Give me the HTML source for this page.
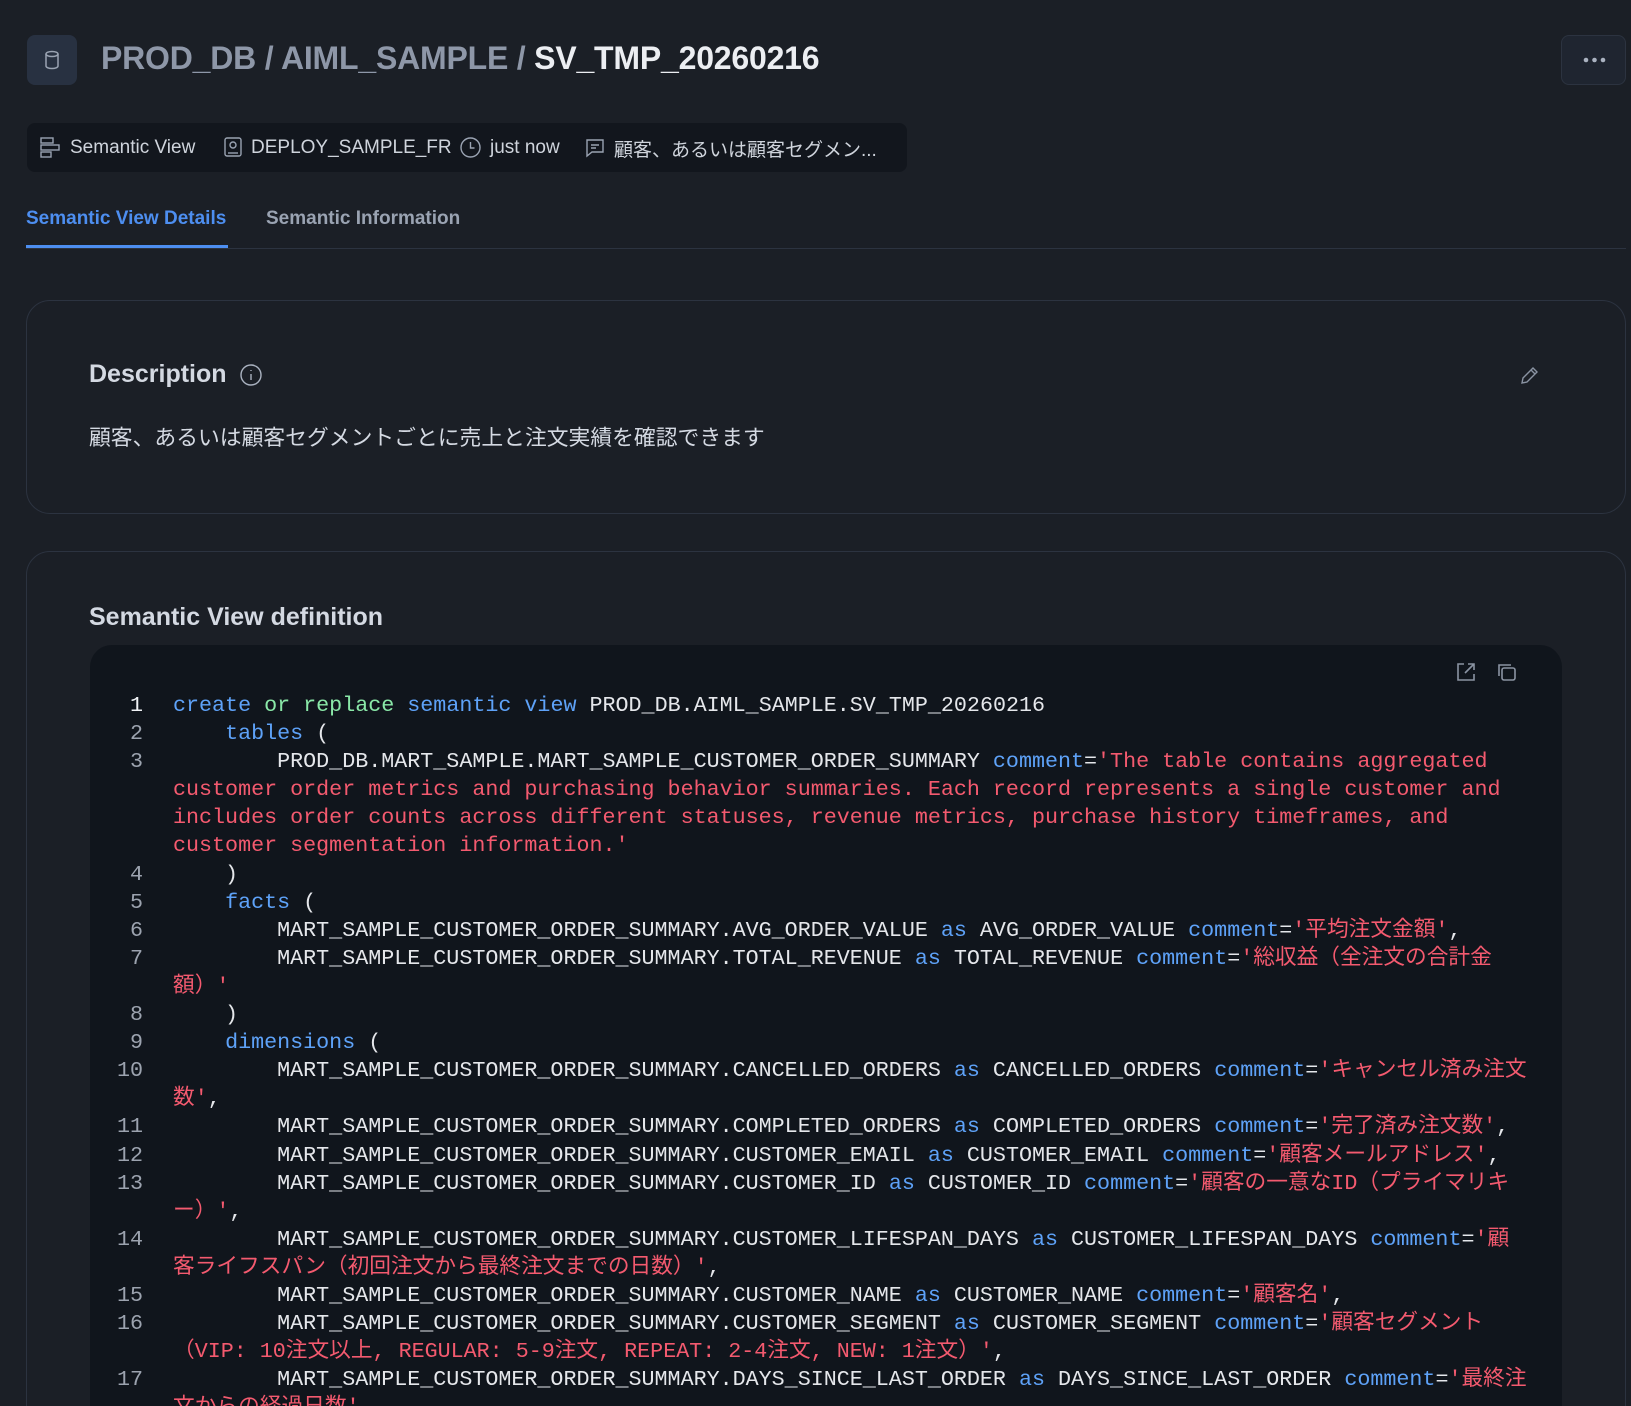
<!DOCTYPE html>
<html><head><meta charset="utf-8">
<style>
*{margin:0;padding:0;box-sizing:border-box}
html,body{width:1631px;height:1406px;overflow:hidden}
body{background:#1b1f26;font-family:"Liberation Sans","Noto Sans CJK JP",sans-serif;position:relative;color:#e5e7eb}
.abs{position:absolute}
.iconbox{left:27px;top:35px;width:50px;height:50px;background:#283141;border-radius:8px}
.title{left:101px;top:40px;font-size:32px;font-weight:bold;letter-spacing:-0.2px;color:#8e97a8;white-space:nowrap}
.title b{color:#eceef2}
.more{left:1561px;top:35px;width:65px;height:50px;border:1px solid #2c3340;background:#1f2530;border-radius:8px}
.meta{left:27px;top:123px;width:880px;height:49px;background:#12161d;border-radius:8px}
.mt{position:absolute;top:137px;font-size:19px;color:#cfd4dc;white-space:nowrap}
.tab{position:absolute;top:208px;font-size:19px;font-weight:bold;white-space:nowrap}
.card{position:absolute;left:26px;width:1600px;border:1px solid #2c3340;border-radius:24px}
.code{position:absolute;left:90px;top:645px;width:1472px;height:800px;background:#10151c;border-radius:22px}
.lines{position:absolute;left:90px;top:692px;width:1460px;font-family:"Liberation Mono","Noto Sans CJK JP",monospace;font-size:21.7px;line-height:28.1px}
.r{position:relative;height:28.1px}
.n{position:absolute;left:0;width:53px;text-align:right;color:#9ca3af}
.c{position:absolute;left:83px;color:#e5e7eb;white-space:pre}
.k{color:#5ea2f8}.g{color:#8ae8a8}.s{color:#f45a6f}
</style></head><body>
<div class="abs iconbox"><svg width="50" height="50" viewBox="0 0 50 50"><ellipse cx="25" cy="19" rx="6" ry="2.5" fill="none" stroke="#9aa3b2" stroke-width="1.5"/><path d="M19 19v12c0 1.4 2.7 2.5 6 2.5s6-1.1 6-2.5V19" fill="none" stroke="#9aa3b2" stroke-width="1.5"/></svg></div>
<div class="abs title">PROD_DB / AIML_SAMPLE / <b>SV_TMP_20260216</b></div>
<div class="abs more"><svg width="65" height="50"><circle cx="24" cy="24" r="2.3" fill="#aab2c0"/><circle cx="32.5" cy="24" r="2.3" fill="#aab2c0"/><circle cx="41" cy="24" r="2.3" fill="#aab2c0"/></svg></div>

<div class="abs meta"></div>
<svg class="abs" style="left:39px;top:135px" width="24" height="24" viewBox="0 0 24 24" fill="none" stroke="#9aa3b2" stroke-width="1.4"><rect x="2" y="3" width="12" height="5"/><rect x="2" y="10" width="18" height="5"/><rect x="2" y="17" width="10" height="5"/></svg>
<div class="mt" style="left:70px">Semantic View</div>
<svg class="abs" style="left:222px;top:136px" width="22" height="22" viewBox="0 0 22 22" fill="none" stroke="#9aa3b2" stroke-width="1.4"><rect x="3" y="2" width="16" height="18" rx="2"/><circle cx="11" cy="9" r="3"/><path d="M6 17h10"/></svg>
<div class="mt" style="left:251px">DEPLOY_SAMPLE_FR</div>
<svg class="abs" style="left:459px;top:136px" width="23" height="23" viewBox="0 0 23 23" fill="none" stroke="#9aa3b2" stroke-width="1.4"><circle cx="11.5" cy="11.5" r="9.5"/><path d="M11.5 6v6h4"/></svg>
<div class="mt" style="left:490px">just now</div>
<svg class="abs" style="left:584px;top:137px" width="22" height="22" viewBox="0 0 22 22" fill="none" stroke="#9aa3b2" stroke-width="1.4"><path d="M3 3h16v12H8l-5 4z"/><path d="M7 8h8M7 11h5"/></svg>
<div class="mt" style="left:614px;top:135px">顧客、あるいは顧客セグメン...</div>

<div class="tab" style="left:26px;color:#4d8ef0">Semantic View Details</div>
<div class="tab" style="left:266px;color:#9aa3b2">Semantic Information</div>
<div class="abs" style="left:26px;top:248px;width:1600px;height:1px;background:#2c3340"></div>
<div class="abs" style="left:26px;top:245px;width:202px;height:3px;background:#4d8ef0"></div>

<div class="card" style="top:300px;height:214px"></div>
<div class="abs" style="left:89px;top:360px;font-size:25px;font-weight:bold;color:#d4d9e2">Description</div>
<svg class="abs" style="left:239px;top:363px" width="24" height="24" viewBox="0 0 24 24" fill="none" stroke="#aab2c0" stroke-width="1.4"><circle cx="12" cy="12" r="10"/><path d="M12 11v6M12 7v1"/></svg>
<svg class="abs" style="left:1518px;top:363px" width="24" height="24" viewBox="0 0 24 24" fill="none" stroke="#8a93a2" stroke-width="1.4"><path d="M4 20l1-5L15 5l4 4L9 19z M13 7l4 4"/></svg>
<div class="abs" style="left:89px;top:421px;font-size:21.8px;color:#d4d9e2">顧客、あるいは顧客セグメントごとに売上と注文実績を確認できます</div>

<div class="card" style="top:551px;height:900px"></div>
<div class="abs" style="left:89px;top:603px;font-size:25px;font-weight:bold;color:#d4d9e2">Semantic View definition</div>
<div class="code"></div>
<svg class="abs" style="left:1454px;top:660px" width="24" height="24" viewBox="0 0 24 24" fill="none" stroke="#8a93a2" stroke-width="1.6"><path d="M10 4H4v16h16v-6M14 4h6v6M20 4L11 13"/></svg>
<svg class="abs" style="left:1494px;top:660px" width="24" height="24" viewBox="0 0 24 24" fill="none" stroke="#8a93a2" stroke-width="1.6"><rect x="8" y="8" width="13" height="12" rx="2"/><path d="M5 16V5h12"/></svg>

<div class="lines">
<div class="r"><span class="n" style="color:#f1f3f6">1</span><span class="c"><span class="k">create</span> <span class="g">or replace</span> <span class="k">semantic view</span> PROD_DB.AIML_SAMPLE.SV_TMP_20260216</span></div>
<div class="r"><span class="n">2</span><span class="c">    <span class="k">tables</span> (</span></div>
<div class="r"><span class="n">3</span><span class="c">        PROD_DB.MART_SAMPLE.MART_SAMPLE_CUSTOMER_ORDER_SUMMARY <span class="k">comment</span>=<span class="s">'The table contains aggregated</span></span></div>
<div class="r"><span class="c s">customer order metrics and purchasing behavior summaries. Each record represents a single customer and</span></div>
<div class="r"><span class="c s">includes order counts across different statuses, revenue metrics, purchase history timeframes, and</span></div>
<div class="r"><span class="c s">customer segmentation information.'</span></div>
<div class="r"><span class="n">4</span><span class="c">    )</span></div>
<div class="r"><span class="n">5</span><span class="c">    <span class="k">facts</span> (</span></div>
<div class="r"><span class="n">6</span><span class="c">        MART_SAMPLE_CUSTOMER_ORDER_SUMMARY.AVG_ORDER_VALUE <span class="k">as</span> AVG_ORDER_VALUE <span class="k">comment</span>=<span class="s">'平均注文金額'</span>,</span></div>
<div class="r"><span class="n">7</span><span class="c">        MART_SAMPLE_CUSTOMER_ORDER_SUMMARY.TOTAL_REVENUE <span class="k">as</span> TOTAL_REVENUE <span class="k">comment</span>=<span class="s">'総収益（全注文の合計金</span></span></div>
<div class="r"><span class="c s">額）'</span></div>
<div class="r"><span class="n">8</span><span class="c">    )</span></div>
<div class="r"><span class="n">9</span><span class="c">    <span class="k">dimensions</span> (</span></div>
<div class="r"><span class="n">10</span><span class="c">        MART_SAMPLE_CUSTOMER_ORDER_SUMMARY.CANCELLED_ORDERS <span class="k">as</span> CANCELLED_ORDERS <span class="k">comment</span>=<span class="s">'キャンセル済み注文</span></span></div>
<div class="r"><span class="c"><span class="s">数'</span>,</span></div>
<div class="r"><span class="n">11</span><span class="c">        MART_SAMPLE_CUSTOMER_ORDER_SUMMARY.COMPLETED_ORDERS <span class="k">as</span> COMPLETED_ORDERS <span class="k">comment</span>=<span class="s">'完了済み注文数'</span>,</span></div>
<div class="r"><span class="n">12</span><span class="c">        MART_SAMPLE_CUSTOMER_ORDER_SUMMARY.CUSTOMER_EMAIL <span class="k">as</span> CUSTOMER_EMAIL <span class="k">comment</span>=<span class="s">'顧客メールアドレス'</span>,</span></div>
<div class="r"><span class="n">13</span><span class="c">        MART_SAMPLE_CUSTOMER_ORDER_SUMMARY.CUSTOMER_ID <span class="k">as</span> CUSTOMER_ID <span class="k">comment</span>=<span class="s">'顧客の一意なID（プライマリキ</span></span></div>
<div class="r"><span class="c"><span class="s">ー）'</span>,</span></div>
<div class="r"><span class="n">14</span><span class="c">        MART_SAMPLE_CUSTOMER_ORDER_SUMMARY.CUSTOMER_LIFESPAN_DAYS <span class="k">as</span> CUSTOMER_LIFESPAN_DAYS <span class="k">comment</span>=<span class="s">'顧</span></span></div>
<div class="r"><span class="c"><span class="s">客ライフスパン（初回注文から最終注文までの日数）'</span>,</span></div>
<div class="r"><span class="n">15</span><span class="c">        MART_SAMPLE_CUSTOMER_ORDER_SUMMARY.CUSTOMER_NAME <span class="k">as</span> CUSTOMER_NAME <span class="k">comment</span>=<span class="s">'顧客名'</span>,</span></div>
<div class="r"><span class="n">16</span><span class="c">        MART_SAMPLE_CUSTOMER_ORDER_SUMMARY.CUSTOMER_SEGMENT <span class="k">as</span> CUSTOMER_SEGMENT <span class="k">comment</span>=<span class="s">'顧客セグメント</span></span></div>
<div class="r"><span class="c"><span class="s">（VIP: 10注文以上, REGULAR: 5-9注文, REPEAT: 2-4注文, NEW: 1注文）'</span>,</span></div>
<div class="r"><span class="n">17</span><span class="c">        MART_SAMPLE_CUSTOMER_ORDER_SUMMARY.DAYS_SINCE_LAST_ORDER <span class="k">as</span> DAYS_SINCE_LAST_ORDER <span class="k">comment</span>=<span class="s">'最終注</span></span></div>
<div class="r"><span class="c s">文からの経過日数'</span></div>
</div>
</body></html>
